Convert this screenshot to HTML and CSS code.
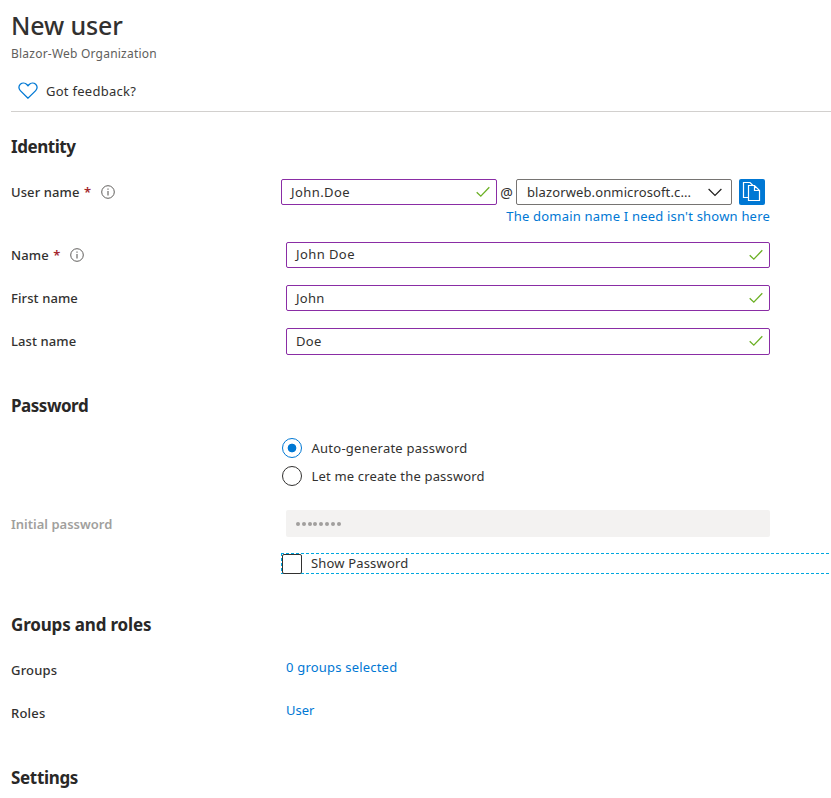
FILE: index.html
```html
<!DOCTYPE html>
<html lang="en">
<head>
<meta charset="utf-8">
<title>New user</title>
<link rel="stylesheet" href="styles.css">
</head>
<body>
<svg class="defs" width="0" height="0">
  <symbol id="check" viewBox="0 0 14 12"><path d="M.7 6.2 4.8 10.2 13.3 1.3" fill="none" stroke="#6bb024" stroke-width="1.3"/></symbol>
  <symbol id="info" viewBox="0 0 14 14"><circle cx="7" cy="7" r="6.300" fill="none" stroke="#605e5c" stroke-width="1"/><path d="M7 6v4.4M7 3.6v1.2" fill="none" stroke="#605e5c" stroke-width="1.1"/></symbol>
</svg>
<header class="header">
  <h1 class="title">New user</h1>
  <p class="subtitle">Blazor-Web Organization</p>
</header>
<div class="toolbar">
  <svg class="heart" viewBox="0 0 20 18"><path d="M10 16.200 2.300 8.600C.4 6.700.5 3.900 2.300 2.200 4.200.6 7.100.7 8.800 2.500L10 3.800 11.200 2.500C12.900.7 15.800.6 17.700 2.200 19.500 3.900 19.600 6.700 17.700 8.600Z" fill="none" stroke="#0078d4" stroke-width="1.3"/></svg>
  <span class="feedback">Got feedback?</span>
</div>
<main class="form">
  <h2 class="section s-identity">Identity</h2>
  <div class="row row-user">
    <label class="label"><span class="t-username">User name</span><span class="req">*</span><svg class="info"><use href="#info"/></svg></label>
    <div class="user">
      <div class="user-line">
        <div class="input short"><span class="t-jd">John.Doe</span><svg class="check"><use href="#check"/></svg></div>
        <span class="at">@</span>
        <div class="input select"><span class="t-domain">blazorweb.onmicrosoft.c...</span><svg class="chevron" viewBox="0 0 14 9"><path d="M.6 1 7 7.500 13.400 1" fill="none" stroke="#201f1e" stroke-width="1.2"/></svg></div>
        <button class="copy" aria-label="Copy"><svg width="26" height="26" viewBox="0 0 26 26"><path d="M9.500 18.500H4.500V3.500H11L14 6.500M9.500 6.500H15.500L20.500 11.500V21.500H9.500ZM15.500 6.500V11.500H20.500" fill="none" stroke="#fff" stroke-width="1.2"/></svg></button>
      </div>
      <a class="link t-shown">The domain name I need isn't shown here</a>
    </div>
  </div>
  <div class="row row-name">
    <label class="label"><span class="t-name">Name</span><span class="req">*</span><svg class="info"><use href="#info"/></svg></label>
    <div class="input up"><span class="t-jd">John Doe</span><svg class="check"><use href="#check"/></svg></div>
  </div>
  <div class="row">
    <label class="label"><span class="t-first">First name</span></label>
    <div class="input"><span class="t-john">John</span><svg class="check"><use href="#check"/></svg></div>
  </div>
  <div class="row row-last">
    <label class="label"><span class="t-first">Last name</span></label>
    <div class="input up"><span class="t-john">Doe</span><svg class="check"><use href="#check"/></svg></div>
  </div>
  <h2 class="section s-password">Password</h2>
  <div class="radios">
    <div class="radio"><span class="dot on"></span><span class="t-auto">Auto-generate password</span></div>
    <div class="radio"><span class="dot"></span><span class="t-let">Let me create the password</span></div>
  </div>
  <div class="row row-initial">
    <label class="label disabled"><span>Initial password</span></label>
    <div class="input off"><i></i><i></i><i></i><i></i><i></i><i></i><i></i><i></i></div>
  </div>
  <div class="show"><svg class="focus" width="552" height="21"><path d="M0 .5H548M0 20.500H548" /><path d="M.5 0V21"/></svg><span class="box"></span><span class="t-show">Show Password</span></div>
  <h2 class="section s-groups">Groups and roles</h2>
  <div class="row row-link">
    <label class="label"><span class="t-groups">Groups</span></label>
    <a class="link t-zero">0 groups selected</a>
  </div>
  <div class="row row-link">
    <label class="label"><span class="t-groups">Roles</span></label>
    <a class="link">User</a>
  </div>
  <h2 class="section s-settings">Settings</h2>
</main>
</body>
</html>
```
FILE: styles.css
```css
* { box-sizing: border-box; }
body { margin: 0; height: 798px; overflow: hidden; background: #fff; color: #323130; font: 13px/20px "Noto Sans", "Open Sans", sans-serif; }
.defs { position: absolute; }
h1, h2, p { margin: 0; }
span, a { white-space: nowrap; }
.header { padding: 7px 0 0 11px; }
.title { font-size: 25px; font-weight: 500; line-height: 36px; letter-spacing: -.12px; }
.subtitle { margin-top: 1px; font-size: 12px; line-height: 20px; letter-spacing: .22px; color: #605e5c; }
.toolbar { display: flex; align-items: center; height: 41px; margin: 7px 0 0 11px; padding-left: 7px; border-bottom: 1px solid #d2d0ce; }
.heart { width: 20px; height: 18px; margin-right: 8px; }
.feedback { letter-spacing: .27px; }
.form { padding-left: 11px; }
.section { font-size: 17px; font-weight: 700; line-height: 24px; color: #292827; }
.s-identity { margin-top: 23px; letter-spacing: -.45px; }
.row { display: flex; height: 26px; margin-bottom: 17px; }
.label { display: flex; align-items: center; width: 275px; height: 26px; flex: none; font-weight: 500; }
.row-user { height: 47px; margin: 20px 0 16px; }
.row-user .label { width: 270px; }
.t-username, .t-name, .t-first { letter-spacing: .1px; }
.t-groups { letter-spacing: .2px; }
.req { margin-left: 4.500px; color: #a4262c; font-weight: 600; }
.info { width: 14px; height: 14px; margin-left: 10px; }
.user { width: 489px; display: flex; flex-direction: column; }
.user-line { display: flex; height: 26px; }
.input { display: flex; align-items: center; justify-content: space-between; width: 484px; height: 26px; padding: 0 6px 0 9px; border: 1px solid #8a2da5; border-radius: 2px; }
.up span { margin-top: -2px; }
.short { width: 216px; }
.t-jd { letter-spacing: .42px; }
.t-john { letter-spacing: .3px; }
.t-domain { letter-spacing: .12px; }
.check { width: 14px; height: 12px; }
.up .check { margin-top: -1px; }
.at { width: 19px; line-height: 27px; font-size: 14px; text-align: center; }
.select { width: 216px; border-color: #767472; padding: 0 9px 0 10px; }
.chevron { width: 14px; height: 9px; }
.copy { width: 26px; height: 26px; padding: 0; margin-left: 7px; border: 0; border-radius: 2px; background: #0078d4; }
.copy svg { display: block; }
.link { color: #0078d4; }
.t-shown { align-self: flex-end; line-height: 22px; letter-spacing: .2px; }
.row-last, .row-last .input { height: 27px; }
.s-password { margin-top: 39px; letter-spacing: -.48px; }
.radios { margin: 20px 0 0 271px; }
.radio { display: flex; align-items: center; height: 20px; margin-bottom: 8px; }
.dot { width: 20px; height: 20px; margin-right: 9.500px; border: 1px solid #323130; border-radius: 50%; }
.dot.on { border-color: #0078d4; background: radial-gradient(circle, #0078d4 4px, transparent 4.700px); }
.t-auto { letter-spacing: .25px; }
.t-let { letter-spacing: .17px; }
.row-initial { height: 27px; margin: 24px 0 16px; }
.disabled { color: #a19f9d; font-weight: 600; height: 27px; }
.off { height: 27px; justify-content: flex-start; gap: 1.800px; border: 0; background: #f3f2f1; padding-left: 10px; }
.off i { width: 4px; height: 4px; border-radius: 50%; background: #a19f9d; }
.show { position: relative; display: flex; align-items: center; height: 21px; margin-left: 270px; }
.focus { position: absolute; left: 0; top: 0; }
.focus path { fill: none; stroke: #00a8e0; stroke-dasharray: 3 2; }
.box { width: 20px; height: 20px; margin: 0 9px 0 1px; border: 1px solid #323130; border-radius: 2px; background: #fff; position: relative; }
.t-show { margin-top: -2px; letter-spacing: .17px; }
.s-groups { margin-top: 39px; letter-spacing: -.17px; }
.row-link { height: 26px; }
.s-groups + .row-link { margin-top: 20px; }
.row-link .link { line-height: 21px; }
.t-zero { letter-spacing: .2px; }
.s-settings { margin-top: 40px; letter-spacing: -.33px; }
```
